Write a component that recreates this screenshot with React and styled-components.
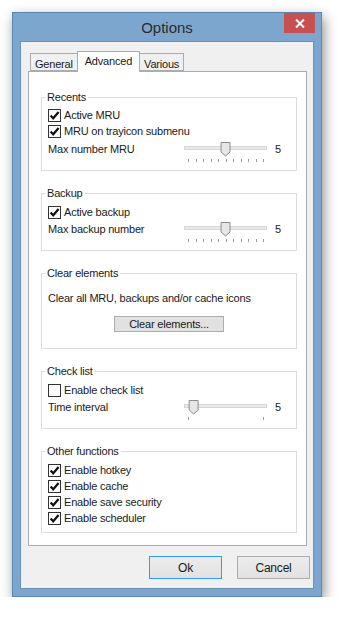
import React from 'react';
import styled, { createGlobalStyle } from 'styled-components';

const GlobalStyle = createGlobalStyle`
  html, body {
    margin: 0;
    padding: 0;
    background: #ffffff;
  }
  body {
    font-family: 'Liberation Sans', Arial, sans-serif;
    font-size: 11px;
    letter-spacing: -0.2px;
    color: #1a1a1a;
  }
`;

const Window = styled.div`
  margin: 12px 0 0 12px;
  width: 310px;
  height: 585px;
  box-sizing: border-box;
  background: #7da6cf;
  border: 1px solid #5f86ae;
  box-shadow: 2px 5px 12px rgba(0, 0, 0, 0.45);
  padding: 0 7px 7px 7px;
  display: flex;
  flex-direction: column;
`;

const TitleBar = styled.div`
  position: relative;
  height: 29px;
  display: flex;
  align-items: center;
  justify-content: center;
`;

const Title = styled.div`
  font-size: 15px;
  letter-spacing: 0;
  color: #2b2b2b;
  padding-top: 1px;
`;

const CloseButton = styled.div`
  position: absolute;
  top: 0;
  right: -1px;
  width: 31px;
  height: 20px;
  background: #c75050;
  display: flex;
  align-items: center;
  justify-content: center;
`;

const Content = styled.div`
  flex: 1;
  background: #f0f0f0;
  border: 1px solid #6d90b5;
  padding: 8px 6px 9px 7px;
  display: flex;
  flex-direction: column;
`;

const TabRow = styled.div`
  display: flex;
  align-items: flex-end;
  padding-left: 2px;
  height: 21px;
  position: relative;
  z-index: 1;
`;

const Tab = styled.div`
  box-sizing: border-box;
  height: ${({ $active }) => ($active ? '21px' : '18px')};
  margin-bottom: ${({ $active }) => ($active ? '-1px' : '0')};
  padding: ${({ $active }) => ($active ? '2px 7px 0' : '3px 4px 0')};
  background: ${({ $active }) => ($active ? '#ffffff' : '#f0f0f0')};
  border: 1px solid #acacac;
  border-bottom: ${({ $active }) => ($active ? 'none' : '1px solid #acacac')};
  margin-left: ${({ $active }) => ($active ? '-1px' : '0')};
  margin-right: ${({ $active }) => ($active ? '-1px' : '0')};
  position: relative;
  z-index: ${({ $active }) => ($active ? 2 : 1)};
  line-height: 14px;
  color: #1a1a1a;
  white-space: nowrap;
`;

const Panel = styled.div`
  box-sizing: border-box;
  height: 475px;
  background: #ffffff;
  border: 1px solid #acacac;
  padding: 17px 9px 0 12px;
  display: flex;
  flex-direction: column;
  gap: 14px;
`;

const Group = styled.fieldset`
  margin: 0;
  border: 1px solid #dcdcdc;
  padding: ${({ $top }) => $top}px 6px ${({ $bottom }) => $bottom}px 6px;
  min-width: 0;
  display: flex;
  flex-direction: column;
`;

const Legend = styled.legend`
  padding: 0 2px;
  margin-left: -3px;
  line-height: 16px;
  color: #1a1a1a;
`;

const CheckRow = styled.label`
  display: flex;
  align-items: center;
  gap: 3px;
  height: 16px;
  line-height: 16px;
`;

const Box = styled.span`
  box-sizing: border-box;
  width: 13px;
  height: 13px;
  border: 1px solid #333333;
  background: #ffffff;
  display: flex;
  align-items: center;
  justify-content: center;
`;

const SliderRow = styled.div`
  display: grid;
  grid-template-columns: 1fr 90px 19px;
  height: 23px;
  margin-top: ${({ $gap }) => $gap}px;
`;

const SliderLabel = styled.span`
  line-height: 16px;
`;

const SliderValue = styled.span`
  line-height: 16px;
  padding-left: 4px;
`;

const Text = styled.div`
  line-height: 16px;
  margin-top: ${({ $gap }) => $gap}px;
`;

const ClearButton = styled.div`
  align-self: center;
  box-sizing: border-box;
  width: 110px;
  height: 16px;
  margin-top: 10px;
  border: 1px solid #adadad;
  background: #e1e1e1;
  display: flex;
  align-items: center;
  justify-content: center;
  line-height: 14px;
`;

const ButtonRow = styled.div`
  display: flex;
  justify-content: flex-end;
  gap: 15px;
  margin-top: 10px;
  margin-right: -3px;
`;

const DialogButton = styled.div`
  box-sizing: border-box;
  width: 73px;
  height: 23px;
  border: 1px solid ${({ $default }) => ($default ? '#3399ff' : '#adadad')};
  background: linear-gradient(#ececec, #e2e2e2);
  display: flex;
  align-items: center;
  justify-content: center;
  color: #1a1a1a;
  font-size: 12px;
`;

const Check = ({ checked, children }) => (
  <CheckRow>
    <Box>
      {checked && (
        <svg width="11" height="11" viewBox="0 0 11 11">
          <path d="M1.6 5.6 L4.2 8.3 L9.6 2" fill="none" stroke="#111" strokeWidth="2.2" />
        </svg>
      )}
    </Box>
    {children}
  </CheckRow>
);

const Slider = ({ position, ticks }) => {
  const start = 7;
  const end = 82;
  const marks = Array.from({ length: ticks }, (_, i) =>
    ticks > 1 ? start + ((end - start) * i) / (ticks - 1) : start
  );
  const cx = start + (end - start) * position;
  return (
    <svg width="90" height="23" viewBox="0 0 90 23">
      <rect x="3.5" y="5.5" width="82" height="3" fill="#e7eaea" stroke="#d6d6d6" />
      {marks.map((x) => (
        <line key={x} x1={Math.round(x) + 0.5} y1="18" x2={Math.round(x) + 0.5} y2="21" stroke="#9a9a9a" />
      ))}
      <path
        d={`M${cx - 4.5} 1.5 h9 v9.5 l-4.5 4 l-4.5 -4 z`}
        fill="#e6e6e6"
        stroke="#8c8c8c"
      />
    </svg>
  );
};

const SliderField = ({ label, position, ticks, gap }) => (
  <SliderRow $gap={gap}>
    <SliderLabel>{label}</SliderLabel>
    <Slider position={position} ticks={ticks} />
    <SliderValue>5</SliderValue>
  </SliderRow>
);

const App = () => (
  <>
    <GlobalStyle />
    <Window>
      <TitleBar>
        <Title>Options</Title>
        <CloseButton>
          <svg width="10" height="9" viewBox="0 0 10 9">
            <path d="M1 0.5 L9 8.5 M9 0.5 L1 8.5" stroke="#ffffff" strokeWidth="2" />
          </svg>
        </CloseButton>
      </TitleBar>
      <Content>
        <TabRow>
          <Tab>General</Tab>
          <Tab $active>Advanced</Tab>
          <Tab>Various</Tab>
        </TabRow>
        <Panel>
          <Group $top={2} $bottom={6}>
            <Legend>Recents</Legend>
            <Check checked>Active MRU</Check>
            <Check checked>MRU on trayicon submenu</Check>
            <SliderField label="Max number MRU" position={0.5} ticks={11} gap={2} />
          </Group>
          <Group $top={3} $bottom={6}>
            <Legend>Backup</Legend>
            <Check checked>Active backup</Check>
            <SliderField label="Max backup number" position={0.5} ticks={11} gap={1} />
          </Group>
          <Group $top={0} $bottom={16}>
            <Legend>Clear elements</Legend>
            <Text $gap={9}>Clear all MRU, backups and/or cache icons</Text>
            <ClearButton>Clear elements...</ClearButton>
          </Group>
          <Group $top={3} $bottom={6}>
            <Legend>Check list</Legend>
            <Check>Enable check list</Check>
            <SliderField label="Time interval" position={0.075} ticks={2} gap={1} />
          </Group>
          <Group $top={3} $bottom={6}>
            <Legend>Other functions</Legend>
            <Check checked>Enable hotkey</Check>
            <Check checked>Enable cache</Check>
            <Check checked>Enable save security</Check>
            <Check checked>Enable scheduler</Check>
          </Group>
        </Panel>
        <ButtonRow>
          <DialogButton $default>Ok</DialogButton>
          <DialogButton>Cancel</DialogButton>
        </ButtonRow>
      </Content>
    </Window>
  </>
);

export default App;
